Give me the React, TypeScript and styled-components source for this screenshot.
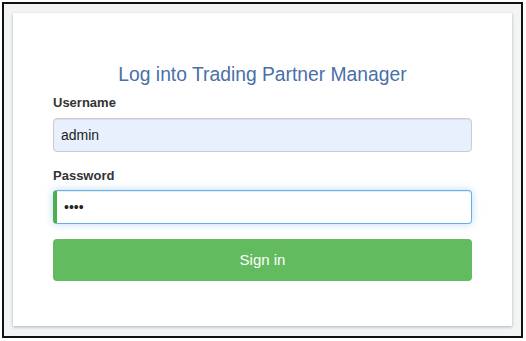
import React from "react";
import styled, { createGlobalStyle } from "styled-components";

const GlobalStyle = createGlobalStyle`
  * { box-sizing: border-box; }
  html, body {
    margin: 0;
    padding: 0;
    background: #ffffff;
    font-family: "Liberation Sans", Arial, sans-serif;
  }
`;

const LoginPage: React.FC = () => {
  return (
    <Frame>
      <Card>
        <Title>Log into Trading Partner Manager</Title>
        <form onSubmit={(e) => e.preventDefault()}>
          <FormGroup>
            <Label htmlFor="username">Username</Label>
            <Input id="username" type="text" defaultValue="admin" autofilled />
          </FormGroup>
          <FormGroup>
            <Label htmlFor="password">Password</Label>
            <Input id="password" type="password" defaultValue="1234" focused />
          </FormGroup>
          <SubmitButton type="submit">Sign in</SubmitButton>
        </form>
      </Card>
    </Frame>
  );
};

export default function App() {
  return (
    <>
      <GlobalStyle />
      <LoginPage />
    </>
  );
}

const Frame = styled.div`
  margin: 2px 0 0 2px;
  width: 521px;
  height: 336px;
  border: 2px solid #111;
  background: #f3f4f6;
  padding: 9px 9px 10px 9px;
`;

const Card = styled.div`
  height: 100%;
  background: #fff;
  box-shadow: 0 1px 3px rgba(0, 0, 0, 0.28);
  padding: 51px 40px 0;
`;

const Title = styled.h2`
  margin: 0 0 9px;
  font-size: 19.3px;
  font-weight: normal;
  line-height: 1.1;
  text-align: center;
  color: #4a6fa8;
`;

const FormGroup = styled.div`
  margin-bottom: 15px;
`;

const Label = styled.label`
  display: block;
  margin-bottom: 5px;
  font-size: 13px;
  font-weight: bold;
  line-height: 18.6px;
  color: #333;
`;

const Input = styled.input<{ autofilled?: boolean; focused?: boolean }>`
  display: block;
  width: 100%;
  height: 34px;
  padding: 6px 7px;
  font-family: "Liberation Sans", Arial, sans-serif;
  font-size: 14px;
  color: #222;
  border-radius: 4px;
  outline: none;
  background: ${({ autofilled }) => (autofilled ? "#e8f0fe" : "#fff")};
  border: 1px solid ${({ focused }) => (focused ? "#66afe9" : "#c9ccd1")};
  border-left: ${({ focused }) =>
    focused ? "4px solid #4cae4c" : "1px solid #c9ccd1"};
  box-shadow: ${({ focused }) =>
    focused
      ? "inset 0 1px 1px rgba(0,0,0,.075), 0 0 8px rgba(102,175,233,.45)"
      : "inset 0 1px 1px rgba(0,0,0,.075)"};
`;

const SubmitButton = styled.button`
  display: block;
  width: 100%;
  height: 42px;
  padding: 10px 16px;
  border: none;
  border-radius: 4px;
  background: #63bb5f;
  color: #fff;
  font-family: "Liberation Sans", Arial, sans-serif;
  font-size: 15px;
  line-height: 20px;
  cursor: pointer;
`;
